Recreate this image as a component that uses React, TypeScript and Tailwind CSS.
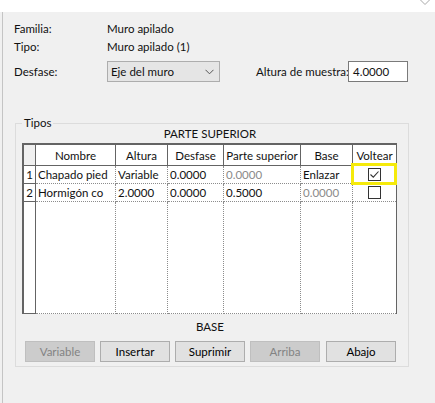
import React from "react";

const cols = [14, 80, 52, 56, 77, 52, 44];

function Check({ checked }: { checked?: boolean }) {
  return (
    <div className="w-[13px] h-[13px] border border-[#333333] bg-white flex items-center justify-center">
      {checked && (
        <svg width="11" height="11" viewBox="0 0 11 11">
          <path d="M1.5 5.5 L4.3 8.2 L9.5 2.5" fill="none" stroke="#333" strokeWidth="1.1" />
        </svg>
      )}
    </div>
  );
}

function Btn({ label, disabled, last }: { label: string; disabled?: boolean; last?: boolean }) {
  return (
    <div
      className={
        "w-[70px] h-[21px] flex items-center justify-center border whitespace-nowrap " +
        (disabled
          ? "bg-[#cccccc] border-[#bfbfbf] text-[#838383]"
          : "bg-[#e1e1e1] border-[#adadad] text-black") +
        (last ? " ml-[6px]" : "")
      }
    >
      {label}
    </div>
  );
}

export default function App() {
  const header = ["", "Nombre", "Altura", "Desfase", "Parte superior", "Base", "Voltear"];
  return (
    <div
      className="w-[435px] h-[403px] bg-[#f0f0f0] overflow-hidden flex flex-col text-[11.5px] leading-[15px] text-[#111111] whitespace-nowrap"
      style={{ fontFamily: 'Lato, "Noto Sans", sans-serif' }}
    >
      <div className="h-[12px] bg-white shrink-0 flex justify-end">
        <svg className="mr-[5px]" width="10" height="6" viewBox="0 0 10 6">
          <path d="M0.5 0 L5 4.5 L9.5 0" fill="none" stroke="#a8a8a8" strokeWidth="1" />
        </svg>
      </div>
      <div className="flex-1 flex">
        <div className="w-[2px]" />
        <div className="w-px bg-[#c4c4c4]" />
        <div className="flex-1 flex flex-col">
          <div className="mt-[7px] h-[18px] flex items-center pl-[11px]">
            <div className="w-[93px]">Familia:</div>
            <div>Muro apilado</div>
          </div>
          <div className="h-[19px] flex items-center pl-[11px]">
            <div className="w-[93px]">Tipo:</div>
            <div>Muro apilado (1)</div>
          </div>
          <div className="mt-[5px] h-[21px] flex items-center pl-[11px]">
            <div className="w-[93px]">Desfase:</div>
            <div className="w-[113px] h-[21px] bg-[#e5e5e5] border border-[#adadad] flex items-center justify-between pl-[3px] pr-[5px]">
              <span>Eje del muro</span>
              <svg width="9" height="6" viewBox="0 0 9 6">
                <path d="M0.5 0.8 L4.5 4.8 L8.5 0.8" fill="none" stroke="#555" strokeWidth="1" />
              </svg>
            </div>
            <div className="ml-[36px] w-[92px]">Altura de muestra:</div>
            <div className="w-[60px] h-[21px] bg-white border border-[#7a7a7a] flex items-center pl-[4px]">
              4.0000
            </div>
          </div>

          <div className="mt-[41px] ml-[12px] w-[394px] h-[244px] border border-[#dcdcdc] relative flex flex-col">
            <div className="absolute left-[6px] -top-[9px] px-[2px] bg-[#f0f0f0]">Tipos</div>
            <div className="h-[19px] flex items-center justify-center pr-[4px]">PARTE SUPERIOR</div>
            <div className="ml-[6px] w-[375px] h-[171px] border-l-2 border-t-2 border-r border-[#646464] bg-white flex flex-col">
              <div className="flex h-[21px] border-b border-[#646464]">
                {header.map((h, i) => (
                  <div
                    key={i}
                    style={{ width: cols[i] - (i === 0 ? 2 : 0) - (i === 6 ? 1 : 0) }}
                    className={
                      "flex items-center justify-center shrink-0 overflow-hidden " +
                      (i < 6 ? "border-r border-[#646464] " : "") +
                      (i === 0 ? "bg-[#f0f0f0]" : "bg-white")
                    }
                  >
                    {h}
                  </div>
                ))}
              </div>
              {[
                ["1", "Chapado pied", "Variable", "0.0000", "0.0000", "Enlazar", "c"],
                ["2", "Hormigón co", "2.0000", "0.0000", "0.5000", "0.0000", "u"],
              ].map((r, ri) => (
                <div key={ri} className="flex h-[18px]">
                  {r.map((c, i) => {
                    const grey = (ri === 0 && i === 4) || (ri === 1 && i === 5);
                    const w = cols[i] - (i === 0 ? 2 : 0) - (i === 6 ? 1 : 0);
                    const base =
                      "shrink-0 flex items-center overflow-hidden " +
                      (i === 0
                        ? "border-r border-b border-[#646464] justify-center "
                        : "border-b border-dotted border-[#8c8c8c] " +
                          (i < 6 ? "border-r pl-[2px] " : "")) +
                      (grey ? "text-[#8a8a8a] " : "");
                    if (i === 6) {
                      return (
                        <div key={i} style={{ width: w }} className={base + " justify-center relative overflow-visible"}>
                          <Check checked={c === "c"} />
                          {ri === 0 && (
                            <div className="absolute left-[-2px] top-[-3px] w-[46px] h-[22px] border-[3px] border-[#f5ea0a]" />
                          )}
                        </div>
                      );
                    }
                    return (
                      <div key={i} style={{ width: w }} className={base}>
                        {c}
                      </div>
                    );
                  })}
                </div>
              ))}
              <div className="flex flex-1">
                {cols.map((cw, i) => (
                  <div
                    key={i}
                    style={{ width: cw - (i === 0 ? 2 : 0) - (i === 6 ? 1 : 0) }}
                    className={
                      "shrink-0 " +
                      (i === 0
                        ? "border-r border-b border-[#646464]"
                        : "border-b border-dotted border-[#8c8c8c] " + (i < 6 ? "border-r" : ""))
                    }
                  />
                ))}
              </div>
            </div>
            <div className="h-[24px] flex items-center justify-center pr-[4px]">BASE</div>
            <div className="mt-[3px] ml-[9px] flex gap-[5px]">
              <Btn label="Variable" disabled />
              <Btn label="Insertar" />
              <Btn label="Suprimir" />
              <Btn label="Arriba" disabled />
              <div className="-ml-[5px]">
                <Btn label="Abajo" last />
              </div>
            </div>
          </div>
        </div>
      </div>
    </div>
  );
}
